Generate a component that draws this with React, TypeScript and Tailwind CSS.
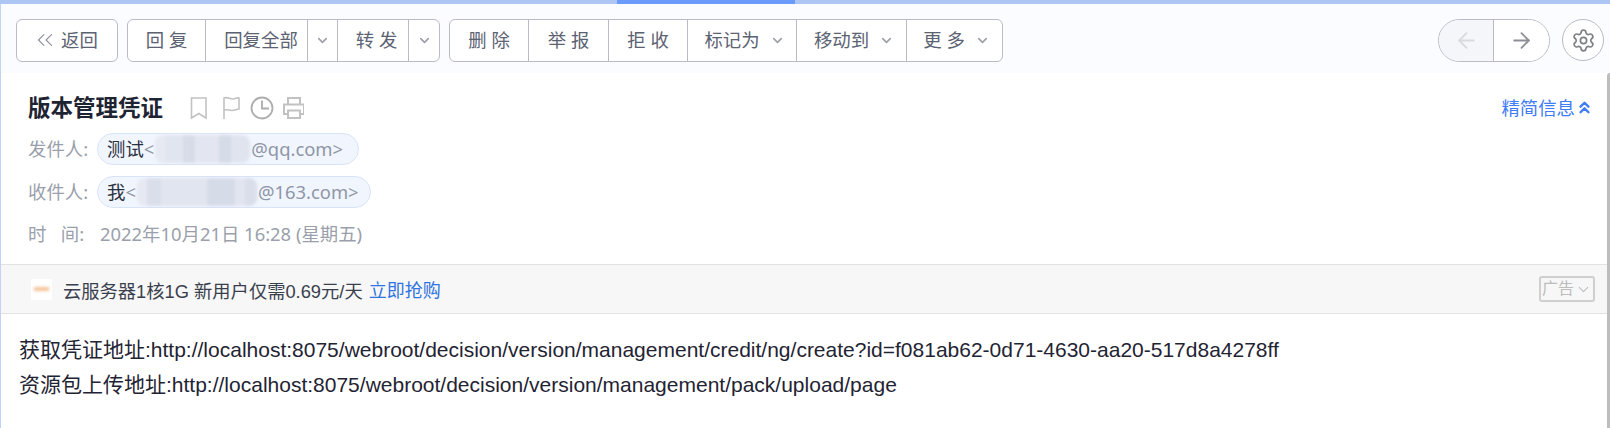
import React from 'react';
import { ArrowLeft, ArrowRight, ChevronDown, ChevronsLeft, ChevronsUp, Settings } from 'lucide-react';

const FONT = "font-['Noto_Sans','Noto_Sans_CJK_SC',sans-serif]";

function Caret() {
  return <ChevronDown size={15} strokeWidth={2.5} className="text-[#9a9ea8]" />;
}

function ToolButton({ label, className, caret }: { label: string; className: string; caret?: boolean }) {
  return (
    <button className={`${className} h-full flex items-center justify-center gap-[10px] border-r border-[#b9bcc6] last:border-r-0 whitespace-pre`}>
      <span>{label}</span>
      {caret && <Caret />}
    </button>
  );
}

function Blur({ blocks }: { blocks: [string, string][] }) {
  return (
    <span className="flex h-[28px] mx-px rounded-[8px] overflow-hidden blur-[1.5px]">
      {blocks.map(([w, c], i) => (
        <span key={i} className={`${w} ${c} h-full`} />
      ))}
    </span>
  );
}

function Pill({ name, host, blocks, className }: { name: string; host: string; blocks: [string, string][]; className: string }) {
  return (
    <div className={`flex items-center h-full rounded-full border border-[#d9e3f7] bg-[#f1f5fe] pl-[9px] text-[#8f96a6] ${className}`}>
      <span className="text-[#2b3040]">{name}</span>
      <span>&lt;</span>
      <Blur blocks={blocks} />
      <span>{host}&gt;</span>
    </div>
  );
}

function MetaRow({ label, children, className }: { label: string; children: React.ReactNode; className: string }) {
  return (
    <div className={`flex items-center ${className}`}>
      <span className="w-[69px] text-[#9a9fab] whitespace-pre">{label}</span>
      {children}
    </div>
  );
}

export default function App() {
  return (
    <div className={`${FONT} w-full h-screen overflow-hidden flex flex-col bg-white text-[18.4px]`}>
      <div className="h-1 shrink-0 bg-[#aec6f3]">
        <div className="ml-[617px] w-[178px] h-full bg-[#6a9bfb]" />
      </div>

      <div className="h-[69px] shrink-0 flex items-center pt-[3px] pl-[15px] pr-[6px] bg-[#fbfcff] border-l border-[#c2d3f5] text-[#5b6272]">
        <div className="h-[43px] flex gap-[9px]">
          <button className="w-[102px] h-full flex items-center justify-center gap-[3px] rounded-[6px] border border-[#b9bcc6] bg-white">
            <ChevronsLeft size={26} strokeWidth={1} className="text-[#8c909b] -ml-1" />
            <span>返回</span>
          </button>
          <div className="flex h-full rounded-[6px] border border-[#b9bcc6] bg-white">
            <ToolButton label="回 复" className="w-[78px]" />
            <ToolButton label="回复全部" className="w-[102px] pl-[9px]" />
            <button className="w-[30px] h-full flex items-center justify-center border-r border-[#b9bcc6]"><Caret /></button>
            <ToolButton label="转 发" className="w-[71px] pl-[7px]" />
            <button className="w-[30px] h-full flex items-center justify-center"><Caret /></button>
          </div>
          <div className="flex h-full rounded-[6px] border border-[#b9bcc6] bg-white">
            <ToolButton label="删 除" className="w-[79px]" />
            <ToolButton label="举 报" className="w-[80px]" />
            <ToolButton label="拒 收" className="w-[79px]" />
            <ToolButton label="标记为" className="w-[109px] pl-[5px]" caret />
            <ToolButton label="移动到" className="w-[110px] pl-[5px]" caret />
            <ToolButton label="更 多" className="w-[95px] pl-[4px]" caret />
          </div>
        </div>
        <div className="ml-auto flex items-center gap-3 h-[43px]">
          <div className="flex h-full w-[112px] rounded-full border border-[#b9bcc6] overflow-hidden">
            <button className="w-[55px] flex items-center justify-center bg-[#f5f6f9] border-r border-[#b9bcc6]">
              <ArrowLeft size={25} strokeWidth={1.8} className="text-[#d8dade]" />
            </button>
            <button className="flex-1 flex items-center justify-center bg-white">
              <ArrowRight size={25} strokeWidth={1.8} className="text-[#8c8f96]" />
            </button>
          </div>
          <button className="w-[42px] h-[42px] rounded-full border border-[#b9bcc6] bg-white flex items-center justify-center">
            <Settings size={25} strokeWidth={1.6} className="text-[#7d7f85]" />
          </button>
        </div>
      </div>

      <div className="flex-1 flex min-h-0">
        <div className="flex-1 min-w-0 border-l border-[#c2d3f5]">
          <div className="h-[191px] pl-[27px] pr-[13px] pt-[18px]">
            <div className="flex items-center h-[34px]">
              <h1 className="text-[22.5px] font-bold text-[#1f2433] w-[162px]">版本管理凭证</h1>
              <svg width="114" height="24" viewBox="0 0 114 24" fill="none" stroke="#c2c2c2" strokeWidth="1.6">
                <path d="M1.500 2h14.500v20l-7.200-4.500L1.500 22z" />
                <path d="M34 23V2c4-1.500 6 1.500 9 1s4-1.500 6-1v11c-3 .5-4 1.500-7 1.500s-5-1.500-8-.5" />
                <circle cx="72" cy="12" r="10.500" strokeWidth="1.800" stroke="#adadad" />
                <path d="M72 4.500V12.500h7" strokeWidth="1.800" stroke="#adadad" />
                <path d="M100 8V2h12v6M100 18h-4V8.500h20V18h-4M100 14.500h12V22h-12z" transform="translate(-2 0)" strokeWidth="2" />
              </svg>
              <button className="ml-auto flex items-center text-[#3f7cf6]">
                <span>精简信息</span>
                <ChevronsUp size={19} strokeWidth={3} />
              </button>
            </div>
            <MetaRow label="发件人:" className="h-8 mt-[8px]">
              <Pill
                name="测试"
                host="@qq.com"
                className="pr-[15px]"
                blocks={[
                  ['w-[10px]', 'bg-[#e6e9f2]'],
                  ['w-[18px]', 'bg-[#e1e5ef]'],
                  ['w-[12px]', 'bg-[#d7dce8]'],
                  ['w-[24px]', 'bg-[#e3e6f0]'],
                  ['w-[12px]', 'bg-[#d6dbe8]'],
                  ['w-[19px]', 'bg-[#e0e4ee]'],
                ]}
              />
            </MetaRow>
            <MetaRow label="收件人:" className="h-8 mt-[11px]">
              <Pill
                name="我"
                host="@163.com"
                className="pr-[11px]"
                blocks={[
                  ['w-[10px]', 'bg-[#e6e9f2]'],
                  ['w-[14px]', 'bg-[#dadeea]'],
                  ['w-[46px]', 'bg-[#e1e5ef]'],
                  ['w-[28px]', 'bg-[#d6dbe8]'],
                  ['w-[10px]', 'bg-[#e1e5ef]'],
                  ['w-[12px]', 'bg-[#d9deea]'],
                ]}
              />
            </MetaRow>
            <MetaRow label="时   间:" className="h-8 mt-[10px] text-[#9a9fab]">
              <span className="ml-[3px] text-[#9a9fab]">2022年10月21日 16:28 (星期五)</span>
            </MetaRow>
          </div>

          <div className="font-['Liberation_Sans','Noto_Sans_CJK_SC',sans-serif] h-[50px] flex items-center pl-[30px] pr-3 bg-[#f7f7f7] border-y border-[#e3e3e3] text-[#3a3f4d]">
            <div className="w-[21px] h-[21px] mr-[11px] bg-white flex items-center justify-center">
              <div className="w-[15px] h-[4px] bg-[#f5c39a] blur-[1.5px]" />
            </div>
            <span className="pt-[5px] text-[18.3px]">云服务器1核1G 新用户仅需0.69元/天</span>
            <a className="ml-[6px] pt-[5px] text-[18px] text-[#2f74e0]">立即抢购</a>
            <div className="ml-auto w-[56px] h-[26px] flex items-center justify-center gap-px rounded-[3px] border-2 border-[#cfcfcf] text-[16px] text-[#bdbdbd]">
              <span>广告</span>
              <ChevronDown size={17} strokeWidth={1.5} />
            </div>
          </div>

          <div className="font-['Liberation_Sans','Noto_Sans_CJK_SC',sans-serif] pl-[18px] pt-[18px] text-[21px] text-[#1f2433] leading-[35px] whitespace-nowrap">
            <p>获取凭证地址:http://localhost:8075/webroot/decision/version/management/credit/ng/create?id=f081ab62-0d71-4630-aa20-517d8a4278ff</p>
            <p>资源包上传地址:http://localhost:8075/webroot/decision/version/management/pack/upload/page</p>
          </div>
        </div>
        <div className="w-[3px] shrink-0 bg-[#bdbdbd] rounded-tl-[3px]" />
      </div>
    </div>
  );
}
